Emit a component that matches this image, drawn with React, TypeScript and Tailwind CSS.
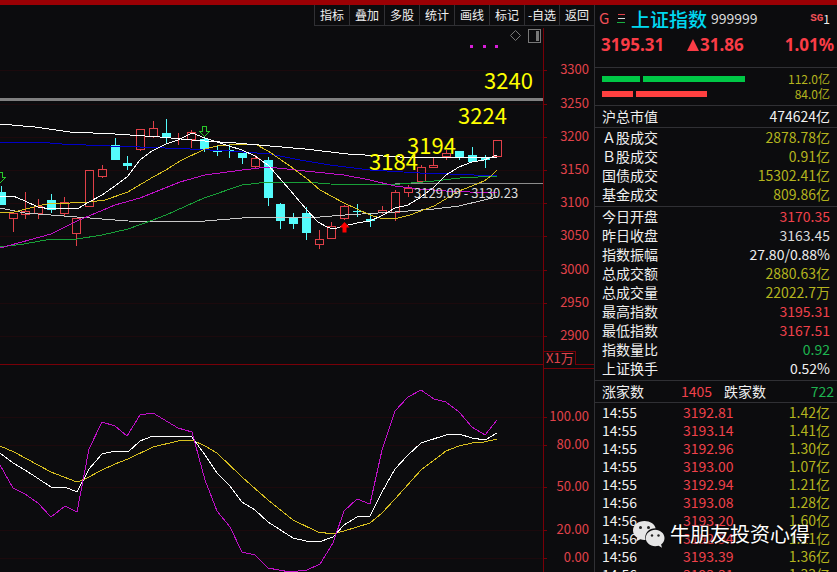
import React from 'react';

type Candle = {
    x: number;
    high: number;
    top: number;
    bottom: number;
    low: number;
    up: boolean;
};

const c = (x: number, high: number, top: number, bottom: number, low: number, up: boolean): Candle => ({ x, high, top, bottom, low, up });

const candles: Candle[] = [
    c(1, 186, 192, 205, 205, false),
    c(13, 213, 213, 218, 232, true),
    c(25, 192, 211, 214, 219, true),
    c(38, 199, 206, 213, 219, true),
    c(51, 194, 200, 210, 213, false),
    c(64, 197, 202, 213, 217, true),
    c(76, 218, 218, 233, 246, true),
    c(89, 170, 170, 206, 206, true),
    c(102, 165, 169, 176, 178, true),
    c(115, 138, 145, 160, 160, false),
    c(127, 156, 163, 166, 170, false),
    c(140, 129, 129, 149, 151, true),
    c(153, 121, 128, 136, 138, true),
    c(166, 119, 133, 137, 144, false),
    c(178, 133, 139, 139, 145, true),
    c(191, 130, 132, 139, 148, true),
    c(204, 138, 139, 150, 152, false),
    c(217, 145, 151, 152, 156, false),
    c(229, 145, 150, 151, 158, false),
    c(242, 153, 153, 158, 164, false),
    c(255, 155, 158, 166, 168, true),
    c(268, 157, 160, 198, 206, false),
    c(280, 203, 204, 221, 229, false),
    c(293, 213, 218, 224, 229, false),
    c(306, 207, 213, 233, 240, false),
    c(319, 230, 239, 244, 249, true),
    c(331, 222, 226, 238, 238, true),
    c(344, 205, 206, 218, 220, true),
    c(357, 204, 211, 212, 217, false),
    c(370, 213, 219, 221, 227, false),
    c(382, 206, 210, 212, 214, true),
    c(395, 190, 192, 212, 221, true),
    c(408, 185, 188, 192, 197, true),
    c(421, 165, 167, 181, 181, true),
    c(433, 157, 165, 167, 168, true),
    c(446, 150, 153, 156, 160, true),
    c(459, 151, 151, 157, 160, false),
    c(472, 147, 155, 162, 162, false),
    c(485, 155, 158, 160, 168, false),
    c(497, 140, 140, 156, 156, true),
];

const averages = [
    { color: '#0000c8', points: '0,142 50,143 62,144 110,146 140,147 190,149 230,151 270,154 300,160 330,165 370,170 420,173 450,174 497,176' },
    { color: '#c8c8c8', points: '0,208 25,213 77,217 102,219 128,221 180,222 205,221 255,217 320,217 345,215 395,212 434,209 459,206 484,200 497,197' },
    { color: '#18a038', points: '0,247 24,244 51,239 77,239 102,235 128,229 153,220 166,215 204,198 242,185 268,182 305,182 330,184 370,185 400,184 434,181 460,178 497,176' },
    { color: '#c010c8', points: '0,248 51,234 77,221 115,205 140,198 180,182 205,175 242,170 268,167 305,171 344,175 370,180 395,186 420,189 446,191 470,192 497,192' },
    { color: '#d8c020', points: '0,212 14,212 38,206 51,203 70,203 89,202 105,200 128,192 153,177 166,170 180,161 205,149 217,146 229,145 255,144 268,151 290,166 306,178 320,190 344,203 370,215 383,219 398,218 410,215 434,206 459,191 472,186 484,181 491,176 497,170' },
    { color: '#ffffff', points: '0,197 13,196 25,201 38,207 51,209 65,208 77,209 89,202 102,195 115,186 128,176 140,160 152,151 166,144 178,140 192,133 205,138 217,142 229,146 242,150 255,156 268,165 290,190 306,209 318,222 327,227 333,229 344,226 357,223 370,221 383,215 395,208 408,205 421,197 434,187 446,175 459,167 472,162 484,160 497,155' },
    { color: '#ffffff', points: '0,124 35,127 70,132 115,134 160,137 192,140 205,141 220,142 236,143 270,146 305,149 348,154 400,157 440,157 497,157' },
];

const oscillators = [
    { color: '#d8c020', points: '0,446 14,452 51,472 77,482 85,479 102,470 115,464 128,459 153,447 178,441 192,440 205,446 217,453 242,477 268,500 293,520 318,532 333,534 344,531 370,523 382,513 395,499 421,470 446,451 459,446 472,443 484,442 497,439' },
    { color: '#ffffff', points: '0,453 13,463 25,470 51,487 65,487 77,492 89,469 102,454 115,451 128,452 140,441 153,436 166,436 192,437 205,455 217,473 230,486 242,502 255,510 268,522 293,538 306,541 319,542 333,537 344,525 357,517 370,516 382,492 395,469 408,455 421,443 446,435 459,434 472,438 485,440 497,433' },
    { color: '#c010c8', points: '0,465 13,488 25,494 38,503 51,517 65,506 77,512 89,449 102,422 115,426 127,436 140,415 153,413 178,428 192,432 205,480 217,511 230,527 242,552 255,555 268,568 290,572 307,570 320,564 333,543 344,511 357,499 370,504 382,450 395,411 408,397 421,390 434,399 446,402 459,412 472,427 485,435 497,420' },
];

const priceAxis = [
    { label: '3300', y: 70 },
    { label: '3250', y: 104 },
    { label: '3200', y: 137 },
    { label: '3150', y: 170 },
    { label: '3100', y: 203 },
    { label: '3050', y: 236 },
    { label: '3000', y: 270 },
    { label: '2950', y: 303 },
    { label: '2900', y: 336 },
];

const oscillatorAxis = [
    { label: '100.00', y: 417 },
    { label: '80.00', y: 445 },
    { label: '50.00', y: 487 },
    { label: '20.00', y: 530 },
    { label: '0.00', y: 558 },
];

const targets = [
    { label: '3240', x: 484, y: 89 },
    { label: '3224', x: 458, y: 124 },
    { label: '3194', x: 407, y: 154 },
    { label: '3184', x: 369, y: 170 },
];

const tools = ['指标', '叠加', '多股', '统计', '画线', '标记', '-自选', '返回'];

const turnover = [
    { label: 'Ａ股成交', value: '2878.78亿', color: 'text-[#b4b41e]' },
    { label: 'Ｂ股成交', value: '0.91亿', color: 'text-[#b4b41e]' },
    { label: '国债成交', value: '15302.41亿', color: 'text-[#b4b41e]' },
    { label: '基金成交', value: '809.86亿', color: 'text-[#b4b41e]' },
];

const summary = [
    { label: '今日开盘', value: '3170.35', color: 'text-[#f0414b]' },
    { label: '昨日收盘', value: '3163.45', color: 'text-[#dcdcdc]' },
    { label: '指数振幅', value: '27.80/0.88%', color: 'text-[#f0f0f0]' },
    { label: '总成交额', value: '2880.63亿', color: 'text-[#b4b41e]' },
    { label: '总成交量', value: '22022.7万', color: 'text-[#b4b41e]' },
    { label: '最高指数', value: '3195.31', color: 'text-[#f0414b]' },
    { label: '最低指数', value: '3167.51', color: 'text-[#f0414b]' },
    { label: '指数量比', value: '0.92', color: 'text-[#1eb450]' },
    { label: '上证换手', value: '0.52%', color: 'text-[#f0f0f0]' },
];

const ticks = [
    ['14:55', '3192.81', '1.42亿'],
    ['14:55', '3193.14', '1.41亿'],
    ['14:55', '3192.96', '1.30亿'],
    ['14:55', '3193.00', '1.07亿'],
    ['14:55', '3192.94', '1.21亿'],
    ['14:56', '3193.08', '1.28亿'],
    ['14:56', '3193.20', '1.60亿'],
    ['14:56', '3192.94', '1.21亿'],
    ['14:56', '3193.39', '1.36亿'],
    ['14:56', '3193.31', '1.33亿'],
];

const CandleShape = ({ x, high, top, bottom, low, up }: Candle) => {
    if (up) {
        return (
            <g stroke="#e04048" fill="none">
                {high < top && <path d={`M${x + 0.5} ${high}V${top}`} />}
                {low > bottom && <path d={`M${x + 0.5} ${bottom}V${low}`} />}
                <rect x={x - 3.5} y={top + 0.5} width={8} height={bottom - top} />
            </g>
        );
    }
    return (
        <g fill="#54fcfc">
            <rect x={x} y={high} width={1} height={low - high} />
            <rect x={x - 4} y={top} width={9} height={bottom - top} />
        </g>
    );
};

const Chart = () => {
    return (
        <svg viewBox="0 26 594 546" className="min-h-0 w-full flex-1" role="img" aria-label="上证指数">
            <g shapeRendering="crispEdges" fill="none">
                {[...priceAxis, ...oscillatorAxis].map((tick) => (
                    <g key={tick.label}>
                        <path d={`M0 ${tick.y + 0.5}H543`} stroke="#1c0a0d" />
                        <path d={`M543 ${tick.y + 0.5}H547`} stroke="#780008" />
                    </g>
                ))}
                <path d="M543.5 28V572" stroke="#780008" />
                <path d="M0 364.5H543M543 368.5H594M543 351.5H575.5V364.5H594" stroke="#780008" />
                <path d="M0 99.5H543" stroke="#808080" strokeWidth={3} />
                <path d="M395 183.5H543" stroke="#8c8c8c" />

                {candles.map((candle) => <CandleShape key={candle.x} {...candle} />)}
                {averages.map((line) => (
                    <polyline key={line.points} points={line.points} stroke={line.color} />
                ))}
                {oscillators.map((line) => (
                    <polyline key={line.points} points={line.points} stroke={line.color} />
                ))}

                <path d="M470 45h3v3h-3zM483 45h3v3h-3zM495 45h3v3h-3z" fill="#d81ed8" />
                <path d="M528.5 29.5h12v13h-12z" stroke="#787878" />
                <path d="M536 31h3v10h-3z" fill="#787878" />
            </g>
            <path d="M515.5 30.5l5 5-5 5-5-5z" fill="none" stroke="#787878" />
            <g fill="none" stroke="#28c828" shapeRendering="crispEdges">
                <path d="M202.5 126.5h4v5h3l-5 5-5-5h3z" />
                <path d="M-0.5 172.5h3v5h3l-5 5-5-5h4z" />
            </g>
            <path d="M344.5 222l5 5.5h-3v5h-4v-5h-3z" fill="#ff0000" />

            <g fill="#ffff00" className="text-[22px]">
                {targets.map((target) => (
                    <text key={target.label} x={target.x} y={target.y}>{target.label}</text>
                ))}
            </g>
            <text x={414} y={198} fill="#dcdcdc" className="text-[13px]">3129.09 - 3130.23</text>
            <g fill="#e0424a" className="text-[13px]" textAnchor="end">
                {[...priceAxis, ...oscillatorAxis].map((tick) => (
                    <text key={tick.label} x={589} y={tick.y + 4}>{tick.label}</text>
                ))}
            </g>
            <text x={546} y={363} fill="#e0424a" className="text-[13px]">X1万</text>
        </svg>
    );
};

const WechatIcon = () => {
    return (
        <svg viewBox="0 0 32 27" className="h-[27px] w-8" aria-hidden="true">
            <path d="M11.5 0C5 0 0 4.2 0 9.5c0 3 1.6 5.6 4.2 7.3L3 20.5l4.3-2.2c1.4.4 2.800.6 4.200.6h1C11 12 16 7.300 22.600 7.300 21.700 3 17 0 11.500 0z" fill="#e6e6e6" />
            <path d="M31.5 17c0-4.6-4.3-8.2-9.3-8.2S12.8 12.4 12.8 17s4.1 8.2 9.4 8.2c1.2 0 2.4-.2 3.5-.5l3.3 2-.9-3.2c2.1-1.5 3.400-3.800 3.400-6.500z" fill="#e6e6e6" />
            <g fill="#222222">
                <circle cx="7.5" cy="6.5" r="1.5" />
                <circle cx="15.5" cy="6.5" r="1.5" />
                <circle cx="19" cy="14.5" r="1.2" />
                <circle cx="25.5" cy="14.5" r="1.2" />
            </g>
        </svg>
    );
};

const InfoTable = ({ rows }: { rows: { label: string; value: string; color: string }[] }) => {
    return (
        <table className="w-full border-t border-[#303034]">
            <tbody>
                {rows.map((row) => (
                    <tr key={row.label} className="h-[19px] leading-[19px]">
                        <th scope="row" className="p-0 pl-[7px] text-left font-normal text-[#f0f0f0]">{row.label}</th>
                        <td className={`p-0 pr-[7px] text-right ${row.color}`}>{row.value}</td>
                    </tr>
                ))}
            </tbody>
        </table>
    );
};

const QuotePanel = () => {
    return (
        <aside className="relative flex w-[243px] shrink-0 flex-col overflow-hidden border-l border-[#303034] text-[14px]">
            <div className="flex h-[27px] shrink-0 items-center pr-[7px] pl-1">
                <span className="w-[18px] text-[15px] text-[#f05058]">G</span>
                <svg viewBox="0 0 8 10" className="mr-1.5 h-2.5 w-2" shapeRendering="crispEdges" aria-hidden="true">
                    <path d="M1 0.5H8" stroke="#e04048" />
                    <path d="M1 4.5H8" stroke="#d8d8d8" />
                    <path d="M0 8.5H8" stroke="#18b040" />
                </svg>
                <h1 className="text-[19px] leading-6 font-medium text-[#00d8f0]">上证指数</h1>
                <span className="ml-1 text-[#dcdcdc]">999999</span>
                <span className="ml-auto font-['Liberation_Mono'] text-[11px] font-bold text-[#f05058]">SG</span>
                <span className="text-[12px] text-[#f0f0f0]">1</span>
            </div>
            <div className="flex h-[35px] shrink-0 items-start pr-[3px] pl-[6px] font-['Noto_Sans'] text-[17px] leading-[26px] font-bold text-[#fa3c46]">
                <span className="w-[86px]">3195.31</span>
                <span className="flex items-center gap-px">
                    <svg viewBox="0 0 12 12" className="h-3 w-3" aria-hidden="true">
                        <path d="M6 0L12 12H0z" fill="#fa3c46" />
                    </svg>
                    31.86
                </span>
                <span className="ml-auto">1.01%</span>
            </div>

            <div className="flex h-[38px] shrink-0 flex-col border-t border-[#303034] px-[7px] pt-[3px] text-[12px] leading-[15px] text-[#b4b41e]">
                <div className="flex items-center gap-[3px]">
                    <span className="h-1.5 w-[38px] bg-[#00c846]"></span>
                    <span className="h-1.5 w-[102px] bg-[#00c846]"></span>
                    <span className="ml-auto">112.0亿</span>
                </div>
                <div className="flex items-center gap-[3px]">
                    <span className="h-1.5 w-[31px] bg-[#ff4040]"></span>
                    <span className="h-1.5 w-[71px] bg-[#ff4040]"></span>
                    <span className="ml-auto">84.0亿</span>
                </div>
            </div>

            <div className="flex h-[22px] shrink-0 items-start justify-between border-t border-[#303034] px-[7px] leading-5 text-[#f0f0f0]">
                <span>沪总市值</span>
                <span>474624亿</span>
            </div>
            <div className="pb-0.5">
                <InfoTable rows={turnover} />
            </div>
            <div className="pb-0.5">
                <InfoTable rows={summary} />
            </div>

            <div className="flex h-[22px] shrink-0 items-start border-t border-[#303034] pr-[3px] pl-[7px] leading-5 text-[#f0f0f0]">
                <span>涨家数</span>
                <span className="ml-auto text-[#f0414b]">1405</span>
                <span className="ml-3">跌家数</span>
                <span className="w-[68px] text-right text-[#1eb450]">722</span>
            </div>

            <table className="w-full border-t border-[#303034]">
                <tbody>
                    {ticks.map((tick, i) => (
                        <tr key={i} className="h-[18px] leading-[18px]">
                            <td className="w-[88px] p-0 pl-[7px] text-[#f0f0f0]">{tick[0]}</td>
                            <td className="p-0 text-[#f0414b]">{tick[1]}</td>
                            <td className="p-0 pr-[7px] text-right text-[#b4b41e]">{tick[2]}</td>
                        </tr>
                    ))}
                </tbody>
            </table>

            <div className="absolute right-[27px] bottom-6 flex items-center gap-[5px] text-[20px] leading-7 text-white text-shadow-[1px_1px_2px_#000000]">
                <WechatIcon />
                <span>牛朋友投资心得</span>
            </div>
        </aside>
    );
};

export default function App() {
    return (
        <div className="flex h-screen flex-col overflow-hidden bg-[#0c0c0e] font-['Noto_Sans_CJK_SC',sans-serif]">
            <div className="h-[5px] shrink-0 bg-[#9a0004]"></div>
            <div className="flex min-h-0 flex-1">
                <main className="flex min-w-0 flex-1 flex-col">
                    <nav className="flex h-[21px] shrink-0 justify-end">
                        {tools.map((tool) => (
                            <button key={tool} type="button" className="w-[35px] border-b border-l border-[#303034] text-[12px] leading-5 whitespace-nowrap text-[#f0f0f0]">
                                {tool}
                            </button>
                        ))}
                    </nav>
                    <Chart />
                </main>
                <QuotePanel />
            </div>
        </div>
    );
}
